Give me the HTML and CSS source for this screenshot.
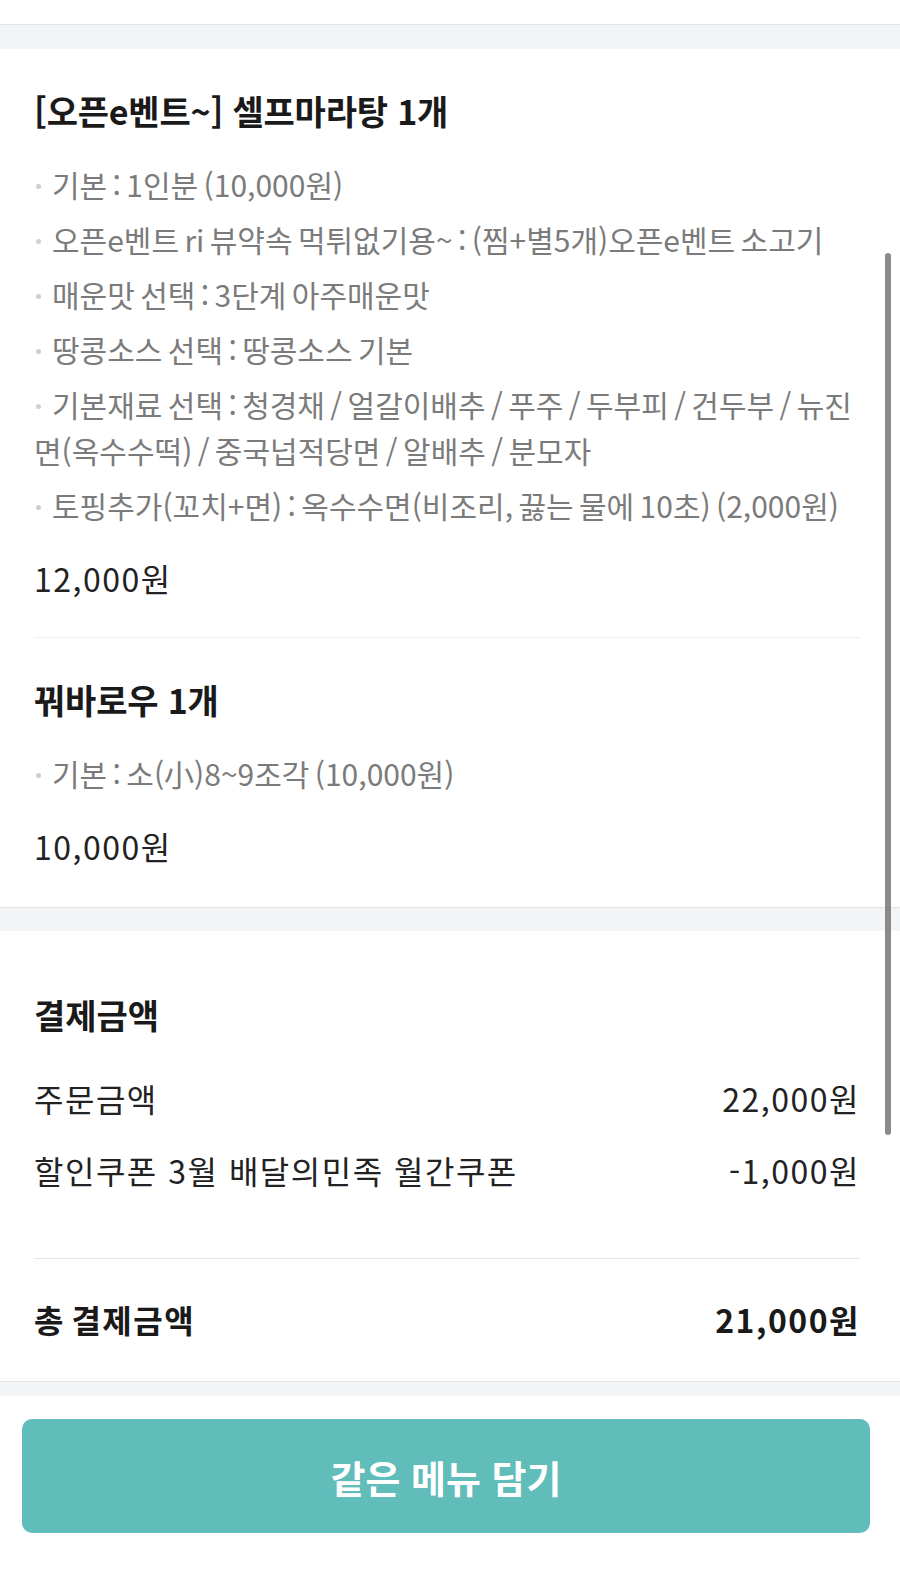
FILE: index.html
```html
<!DOCTYPE html>
<html lang="ko">
<head>
<meta charset="utf-8">
<link rel="stylesheet" href="styles.css">
</head>
<body>
<div class="page">
  <div class="topbar"></div>
  <div class="band band-lg"></div>
  <section class="card">
    <div class="item">
      <h2 class="item-title">[오픈e벤트~] 셀프마라탕 1개</h2>
      <ul class="opts">
        <li>기본 : 1인분 (10,000원)</li>
        <li>오픈e벤트 ri 뷰약속 먹튀없기용~ : (찜+별5개)오픈e벤트 소고기</li>
        <li>매운맛 선택 : 3단계 아주매운맛</li>
        <li>땅콩소스 선택 : 땅콩소스 기본</li>
        <li>기본재료 선택 : 청경채 / 얼갈이배추 / 푸주 / 두부피 / 건두부 / 뉴진면(옥수수떡) / 중국넙적당면 / 알배추 / 분모자</li>
        <li>토핑추가(꼬치+면) : 옥수수면(비조리, 끓는 물에 10초) (2,000원)</li>
      </ul>
      <div class="item-price">12,000원</div>
    </div>
    <div class="item">
      <h2 class="item-title">꿔바로우 1개</h2>
      <ul class="opts">
        <li>기본 : 소(小)8~9조각 (10,000원)</li>
      </ul>
      <div class="item-price">10,000원</div>
    </div>
  </section>
  <div class="band band-md"></div>
  <section class="card pay">
    <h2 class="pay-title">결제금액</h2>
    <div class="pay-rows">
      <div class="row"><span>주문금액</span><span>22,000원</span></div>
      <div class="row"><span>할인쿠폰 3월 배달의민족 월간쿠폰</span><span>-1,000원</span></div>
    </div>
    <div class="row total"><span>총 결제금액</span><span>21,000원</span></div>
  </section>
  <div class="band band-sm"></div>
  <div class="footer">
    <button class="cta">같은 메뉴 담기</button>
  </div>
  <div class="scrollbar"></div>
</div>
</body>
</html>
```
FILE: styles.css
```css
* { box-sizing: border-box; margin: 0; padding: 0; }
html, body { background: #fff; }
body {
  font-family: "Noto Sans CJK KR", "Noto Sans", sans-serif;
  color: #1c1c1c;
}
.page { position: relative; width: 900px; min-height: 1580px; }
.topbar { height: 25px; background: #fff; border-bottom: 1px solid #e3e4e6; }
.band { background: #f3f4f6; }
.band-lg { height: 24px; }
.band-md { height: 23px; }
.band-sm { height: 14px; }
.card { background: #fff; padding: 0 40px 0 34px; border-bottom: 1px solid #e3e4e6; }
.item { padding: 42px 0 39px; }
.item + .item { border-top: 1px solid #efefef; padding-bottom: 41px; }
.item-title { font-size: 34px; font-weight: 700; line-height: 40px; color: #1a1a1a; letter-spacing: -0.2px; }
.opts { list-style: none; margin-top: 30px; display: flex; flex-direction: column; gap: 9px; }
.opts li { font-size: 30px; line-height: 46px; color: #7b7b7b; word-spacing: -3px; }
.opts li::before {
  content: ""; display: inline-block; vertical-align: middle;
  width: 5px; height: 5px; border-radius: 50%; background: #cfcfcf;
  margin: 0 11px 4px 2px;
}
.item-price { margin-top: 30px; font-size: 32px; line-height: 40px; color: #222; letter-spacing: 1.5px; }
.pay { padding-top: 64px; padding-bottom: 42px; }
.pay-title { font-size: 34px; font-weight: 700; line-height: 40px; color: #1a1a1a; }
.pay-rows { margin-top: 43px; display: flex; flex-direction: column; gap: 32px; padding-bottom: 68px; border-bottom: 1px solid #e6e6e6; }
.row { display: flex; justify-content: space-between; font-size: 32px; line-height: 40px; color: #222; letter-spacing: 1.5px; }
.row.total { margin-top: 40px; font-weight: 700; color: #1a1a1a; word-spacing: -4px; }
.footer { padding: 23px 30px 0 22px; }
.cta {
  display: block; width: 100%; height: 114px; border: none; border-radius: 10px;
  background: #61bdba; color: #fff; font-family: inherit;
  font-size: 38px; font-weight: 700;
}
.scrollbar {
  position: absolute; left: 885px; top: 253px; width: 6px; height: 882px;
  border-radius: 3px; background: #8a8a8a;
}
```
